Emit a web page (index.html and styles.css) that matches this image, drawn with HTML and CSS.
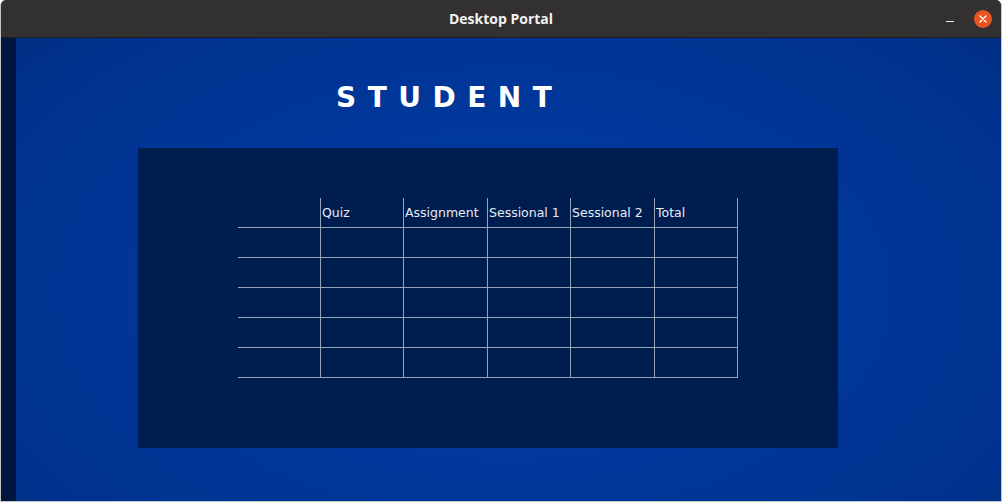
FILE: index.html
```html
<!DOCTYPE html>
<html>
<head>
<meta charset="utf-8">
<link rel="stylesheet" href="styles.css">
</head>
<body>
<div class="window">
  <div class="titlebar">
    <span class="title">Desktop Portal</span>
    <div class="controls">
      <span class="minimize"></span>
      <span class="close">
        <svg width="18" height="18" viewBox="0 0 18 18"><path d="M6 6 L12 12 M12 6 L6 12" stroke="#fff" stroke-width="1.4" stroke-linecap="round"/></svg>
      </span>
    </div>
  </div>
  <div class="content">
    <div class="strip"></div>
    <div class="main">
      <h1 class="heading">STUDENT</h1>
      <div class="panel">
        <div class="grid">
          <div class="cell head first"></div>
          <div class="cell head">Quiz</div>
          <div class="cell head">Assignment</div>
          <div class="cell head">Sessional 1</div>
          <div class="cell head">Sessional 2</div>
          <div class="cell head last">Total</div>

          <div class="cell first"></div><div class="cell"></div><div class="cell"></div><div class="cell"></div><div class="cell"></div><div class="cell last"></div>
          <div class="cell first"></div><div class="cell"></div><div class="cell"></div><div class="cell"></div><div class="cell"></div><div class="cell last"></div>
          <div class="cell first"></div><div class="cell"></div><div class="cell"></div><div class="cell"></div><div class="cell"></div><div class="cell last"></div>
          <div class="cell first"></div><div class="cell"></div><div class="cell"></div><div class="cell"></div><div class="cell"></div><div class="cell last"></div>
          <div class="cell first"></div><div class="cell"></div><div class="cell"></div><div class="cell"></div><div class="cell"></div><div class="cell last"></div>
        </div>
      </div>
    </div>
  </div>
</div>
</body>
</html>
```

FILE: styles.css
```css
* { box-sizing: border-box; }
html, body { margin: 0; padding: 0; background: #ffffff; }
.window {
  width: 1002px;
  height: 502px;
  display: flex;
  flex-direction: column;
  border-left: 1px solid #c4c4c4;
  border-right: 1px solid #c4c4c4;
  border-bottom: 1px solid #c4c4c4;
  border-radius: 6px 6px 0 0;
  overflow: hidden;
  background: #323030;
}
.titlebar {
  height: 38px;
  flex: 0 0 38px;
  background: #323030;
  display: flex;
  align-items: center;
  justify-content: center;
  position: relative;
  border-bottom: 1px solid #1e1d1d;
}
.title {
  font-family: "Open Sans", "DejaVu Sans", sans-serif;
  font-weight: 700;
  font-size: 14px;
  color: #f2f2f2;
  margin-left: 0;
}
.controls {
  position: absolute;
  right: 9px;
  top: 10px;
  display: flex;
  align-items: center;
  gap: 20px;
}
.minimize {
  display: block;
  width: 8px;
  height: 1.5px;
  background: #f0f0f0;
  margin-top: 5px;
}
.close {
  display: block;
  width: 18px;
  height: 18px;
  border-radius: 50%;
  background: #e95420;
}
.close svg { display: block; }
.content {
  flex: 1;
  display: flex;
  min-height: 0;
}
.strip {
  width: 15px;
  flex: 0 0 15px;
  background: #001640;
}
.main {
  flex: 1;
  background: radial-gradient(ellipse 80% 100% at 50% 55%, #0040aa 0%, #003698 45%, #00338f 72%, #002570 100%);
  padding-top: 41px;
  padding-left: 122px;
}
.heading {
  margin: 0 0 0 198px;
  height: 69px;
  font-family: "DejaVu Sans", sans-serif;
  font-weight: 700;
  font-size: 28px;
  letter-spacing: 11.5px;
  color: #ffffff;
  line-height: 38px;
}
.panel {
  width: 700px;
  height: 300px;
  background: #001d50;
  padding-top: 50px;
  padding-left: 100px;
}
.grid {
  display: grid;
  grid-template-columns: 82px 83px 84px 83px 84px 84px;
  grid-auto-rows: 30px;
  width: 500px;
}
.cell {
  border-bottom: 1px solid #97a3b6;
  border-left: 1px solid #97a3b6;
  font-family: "DejaVu Sans", sans-serif;
  font-size: 12.5px;
  color: #e6ecf4;
  display: flex;
  align-items: center;
  padding-left: 1px;
}
.cell.first { border-left: none; }
.cell.last { border-right: 1px solid #97a3b6; }
```
